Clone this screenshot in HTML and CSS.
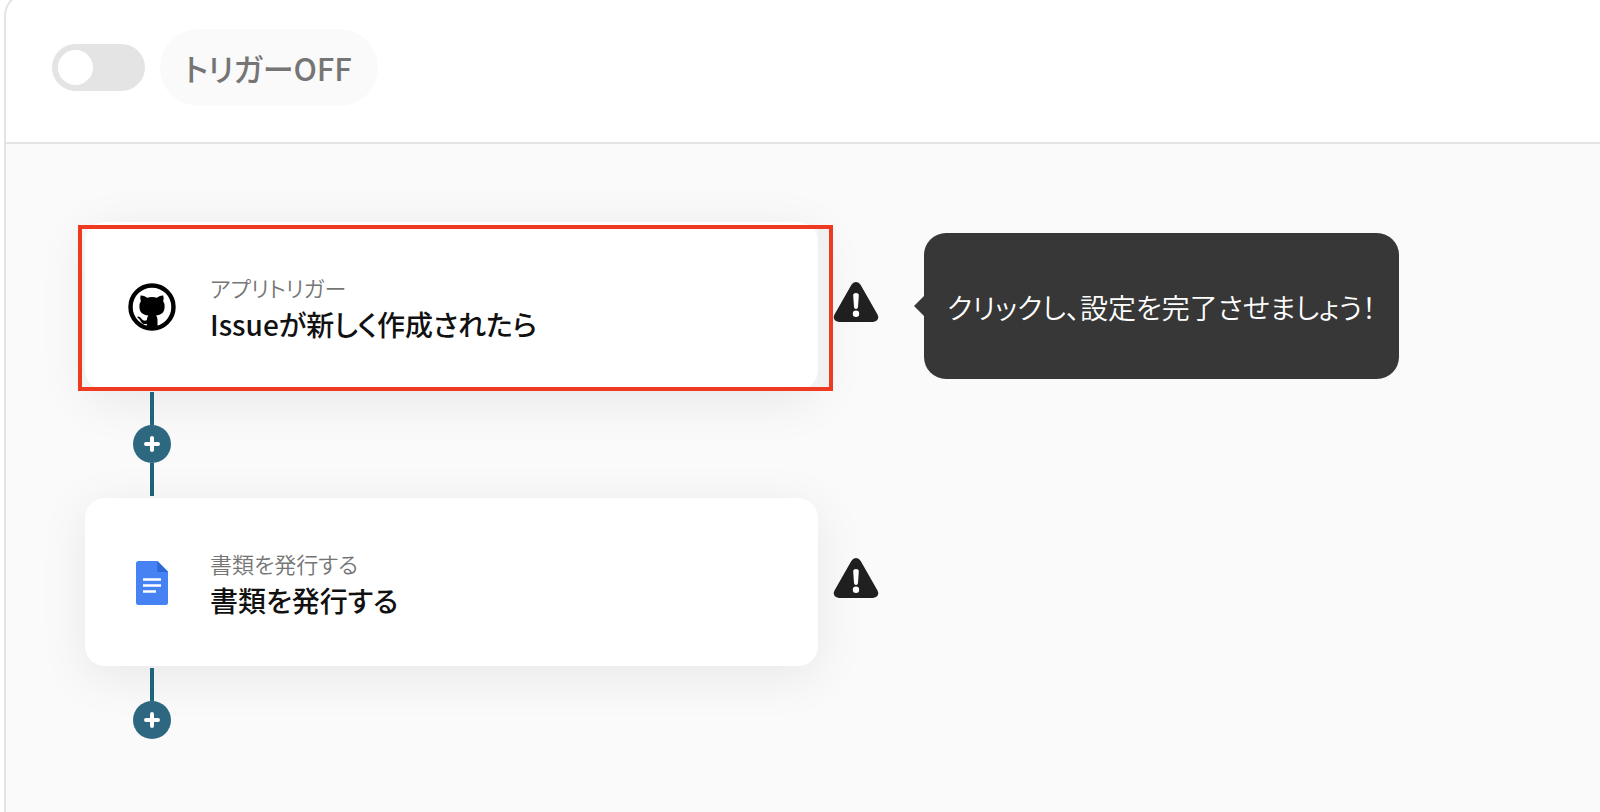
FILE: index.html
```html
<!DOCTYPE html>
<html lang="ja">
<head>
<meta charset="utf-8">
<meta name="viewport" content="width=device-width, initial-scale=1">
<title>トリガー設定</title>
<link rel="stylesheet" href="styles.css">
</head>
<body>
<svg class="defs" aria-hidden="true">
  <symbol id="icon-plus" viewBox="0 0 16 16"><path d="M8 2v12M2 8h12" stroke="#fff" stroke-width="4" stroke-linecap="round"/></symbol>
  <symbol id="icon-warning" viewBox="0 0 46 42">
    <path d="M6 41Q2.600 41 1.200 38.300Q0 36 1.500 33.500L18.300 4Q20 1 23 1T27.700 4L44.500 33.500Q46 36 44.800 38.300Q43.400 41 40 41Z" fill="#202020"/>
    <path d="M20.200 14.500Q20 12 23 12T25.800 14.500L25 26Q24.800 28 23 28T21 26Z" fill="#fff"/>
    <circle cx="23" cy="32.800" r="3.200" fill="#fff"/>
  </symbol>
</svg>
<main class="panel">
  <header class="panel-header">
    <input class="switch" type="checkbox" role="switch" id="trigger">
    <label class="switch-label" for="trigger">トリガーOFF</label>
  </header>
  <div class="flow">
    <section class="step">
      <button class="card card-selected" type="button">
        <span class="card-icon">
          <svg width="48" height="48" viewBox="0 0 48 48" aria-hidden="true">
            <circle cx="24" cy="24" r="21.500" fill="#fff" stroke="#000" stroke-width="4.400"/>
            <path d="M12.600 12.600Q15.500 12.300 19.200 14.700Q24 13.500 28.800 14.700Q32.500 12.300 35.200 12.600Q36.300 15.500 35.200 18.300Q37 20.500 36.600 24.500C36.200 29.800 33.300 31.800 28 32.500Q29.500 34 29.500 37V45H18.800V40.800C15.600 41.400 13.700 40.400 12.600 37.900Q11.600 35.600 9.600 34.700Q8.700 33.600 10.200 33.500Q12.400 33.700 13.700 35.900Q15.300 38.500 18.800 37.300Q18.900 33.900 20.400 32.500C15 31.800 11.800 29.800 11.400 24.500Q11.100 20.500 12.800 18.300Q11.700 15.500 12.600 12.600Z" fill="#000"/>
          </svg>
        </span>
        <span class="card-text">
          <span class="card-kind">アプリトリガー</span>
          <span class="card-title">Issueが新しく作成されたら</span>
        </span>
      </button>
      <svg class="warning" role="img" aria-label="未設定"><use href="#icon-warning"/></svg>
      <div class="tooltip" role="tooltip">クリックし、設定を完了させましょう！</div>
    </section>
    <div class="connector">
      <span class="line"></span>
      <button class="add" type="button" aria-label="ステップを追加"><svg width="16" height="16"><use href="#icon-plus"/></svg></button>
      <span class="line"></span>
    </div>
    <section class="step">
      <button class="card" type="button">
        <span class="card-icon">
          <svg width="32" height="44" viewBox="0 0 32 44" aria-hidden="true">
            <path d="M2.500 0H21.500L32 10.500V41.500Q32 44 29.500 44H2.500Q0 44 0 41.500V2.500Q0 0 2.500 0Z" fill="#4682f4"/>
            <path d="M21.300 0L32 11H21.300Z" fill="#2e68d6"/>
            <path d="M7 18.500H25M7 24.500H25M7 30.500H20" stroke="#fff" stroke-width="2.600"/>
          </svg>
        </span>
        <span class="card-text">
          <span class="card-kind">書類を発行する</span>
          <span class="card-title">書類を発行する</span>
        </span>
      </button>
      <svg class="warning" role="img" aria-label="未設定"><use href="#icon-warning"/></svg>
    </section>
    <div class="connector">
      <span class="line"></span>
      <button class="add" type="button" aria-label="ステップを追加"><svg width="16" height="16"><use href="#icon-plus"/></svg></button>
    </div>
  </div>
</main>
</body>
</html>
```
FILE: styles.css
```css
* {
  box-sizing: border-box;
}

body {
  margin: 0;
  background: #fff;
  color: #111;
  font-family: "Noto Sans CJK JP", sans-serif;
  font-feature-settings: "palt";
  overflow: hidden;
}

button {
  border: 0;
  padding: 0;
  color: inherit;
  font: inherit;
  font-feature-settings: inherit;
  cursor: pointer;
}

.defs {
  position: absolute;
  width: 0;
  height: 0;
}

.panel {
  display: flex;
  flex-direction: column;
  min-height: calc(100vh + 8px);
  margin: -8px -24px 0 4px;
  border: 2px solid #e4e4e4;
  border-bottom: 0;
  border-radius: 24px 24px 0 0;
  overflow: hidden;
}

.panel-header {
  display: flex;
  align-items: center;
  gap: 15px;
  padding: 35px 46px 36px;
  border-bottom: 2px solid #e4e4e4;
}

.switch {
  appearance: none;
  display: flex;
  align-items: center;
  width: 93px;
  height: 47px;
  margin: 0;
  padding: 6px;
  border-radius: 24px;
  background: #e4e4e4;
  cursor: pointer;
}

.switch::before {
  content: "";
  width: 35px;
  height: 35px;
  border-radius: 50%;
  background: #fff;
}

.switch:checked {
  justify-content: flex-end;
  background: #2d6880;
}

.switch-label {
  padding: 17px 26px 16px 24px;
  border-radius: 40px;
  background: #fafafa;
  color: #757575;
  font-size: 31px;
  font-weight: 500;
  line-height: 44px;
}

.flow {
  flex: 1;
  padding: 78px 79px;
  background: #fafafa;
}

.step {
  display: flex;
  align-items: center;
}

.card {
  position: relative;
  display: flex;
  align-items: center;
  gap: 34px;
  flex: 0 1 733px;
  min-height: 168px;
  padding: 0 43px;
  border-radius: 20px;
  background: #fff;
  box-shadow: 0 10px 50px rgba(0, 0, 0, 0.08);
  text-align: left;
}

.card-selected::after {
  content: "";
  position: absolute;
  inset: 3px -15px -1px -7px;
  border: 4px solid #ee3a20;
  background: linear-gradient(#f1f1f1, #f1f1f1) right / 11px 100% no-repeat;
}

.card-icon {
  display: flex;
  justify-content: center;
  width: 48px;
  padding-top: 2px;
}

.card-text {
  display: flex;
  flex-direction: column;
  padding-top: 4px;
}

.card-kind {
  color: #757575;
  font-size: 22px;
  font-weight: 350;
  line-height: 32px;
}

.card-title {
  font-size: 28px;
  font-weight: 500;
  line-height: 42px;
}

.warning {
  flex: none;
  width: 46px;
  height: 42px;
  margin: 0 45px 8px 15px;
}

.tooltip {
  position: relative;
  padding: 53px 23px 51px;
  border-radius: 22px;
  background: #373737;
  color: #fff;
  font-size: 28px;
  font-weight: 350;
  line-height: 42px;
}

.tooltip::before {
  content: "";
  position: absolute;
  top: calc(50% - 11px);
  left: -10px;
  width: 11px;
  height: 22px;
  background: #373737;
  clip-path: polygon(100% 0, 0 50%, 100% 100%);
}

.connector {
  position: relative;
  display: flex;
  flex-direction: column;
  align-items: center;
  width: 38px;
  margin: 2px 48px;
}

.line {
  width: 4px;
  height: 33px;
  background: #1c657c;
}

.add {
  display: grid;
  place-items: center;
  width: 38px;
  height: 38px;
  border-radius: 50%;
  background: #2d6880;
}
```
